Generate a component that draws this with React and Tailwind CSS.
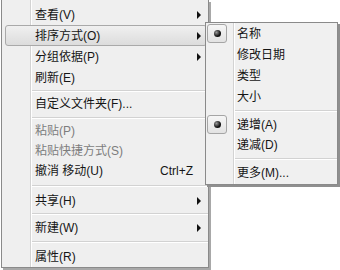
import React from 'react';

// Windows 7 style context menu with the "排序方式" submenu open
const mainItems = [
  { label: '查看(V)', arrow: true, h: 'h-[21px]' },
  { label: '排序方式(O)', arrow: true, h: 'h-[21px]', active: true },
  { label: '分组依据(P)', arrow: true, h: 'h-[21px]' },
  { label: '刷新(E)', h: 'h-[21px]' },
  { sep: 'h-[6px]' },
  { label: '自定义文件夹(F)...', h: 'h-[20px]' },
  { sep: 'h-[7px]' },
  { label: '粘贴(P)', h: 'h-[20px]', disabled: true },
  { label: '粘贴快捷方式(S)', h: 'h-[20px]', disabled: true },
  { label: '撤消 移动(U)', h: 'h-[20px]', shortcut: 'Ctrl+Z' },
  { sep: 'h-[10px]' },
  { label: '共享(H)', arrow: true, h: 'h-[20px]' },
  { sep: 'h-[6px]' },
  { label: '新建(W)', arrow: true, h: 'h-[21px]' },
  { sep: 'h-[8px]' },
  { label: '属性(R)', h: 'h-[21px]' },
];

const subItems = [
  { label: '名称', h: 'h-[21px]', radio: true },
  { label: '修改日期', h: 'h-[21px]' },
  { label: '类型', h: 'h-[21px]' },
  { label: '大小', h: 'h-[21px]' },
  { sep: 'h-[7px]' },
  { label: '递增(A)', h: 'h-[21px]', radio: true },
  { label: '递减(D)', h: 'h-[20px]' },
  { sep: 'h-[8px]' },
  { label: '更多(M)...', h: 'h-[20px]' },
];

const Arrow = () => (
  <span className="block ml-auto w-0 h-0 border-y-[4px] border-y-transparent border-l-[4px] border-l-[#111]" />
);

const Separator = ({ h, left }) => (
  <div className={`${h} flex flex-col justify-center ${left}`}>
    <div className="h-px bg-[#d2d2d2]" />
    <div className="h-px bg-white" />
  </div>
);

const RadioBox = () => (
  <div className="w-[20px] h-[19px] rounded-[3px] border border-[#a5a5a5] bg-[linear-gradient(#f6f6f6,#e2e2e2)] flex items-center justify-center">
    <span className="w-[7px] h-[7px] rounded-full bg-[radial-gradient(circle_at_35%_35%,#9a9a9a,#111_60%)]" />
  </div>
);

export default function App() {
  return (
    <div
      className="relative w-[340px] h-[270px] bg-white text-[12px] leading-none text-[#151515] overflow-hidden"
      style={{ fontFamily: '"Liberation Sans", "Noto Sans CJK SC", sans-serif' }}
    >
      {/* main menu */}
      <div className="ml-[1px] w-[208px] border border-t-0 border-[#8a8a8a] bg-[#efefef] shadow-[2px_2px_0_#a8a8a8] bg-[linear-gradient(to_right,transparent_28px,#d3d3d3_28px,#d3d3d3_29px,#fff_29px,#fff_30px,transparent_30px)]">
        <div className="pt-[4px]">
          {mainItems.map((it, i) =>
            it.sep ? (
              <Separator key={i} h={it.sep} left="ml-[30px]" />
            ) : (
              <div
                key={i}
                className={`${it.h} ml-[3px] mr-[1px] pl-[29px] pr-[5px] flex items-center rounded-[3px] border ${
                  it.active
                    ? 'border-[#a9a9a9] bg-[linear-gradient(#f0f0f0,#dcdcdc)]'
                    : 'border-transparent'
                } ${it.disabled ? 'text-[#7d7d7d]' : ''}`}
              >
                <span>{it.label}</span>
                {it.shortcut && <span className="ml-auto mr-[8px]">{it.shortcut}</span>}
                {it.arrow && <Arrow />}
              </div>
            )
          )}
        </div>
      </div>

      {/* submenu */}
      <div className="absolute left-[205px] top-[22px] w-[133px] border border-[#8a8a8a] bg-[#f0f0f0] shadow-[2px_2px_0_#8f8f8f] bg-[linear-gradient(to_right,transparent_27px,#d3d3d3_27px,#d3d3d3_28px,#fff_28px,#fff_29px,transparent_29px)]">
        <div className="pb-[1px]">
          {subItems.map((it, i) =>
            it.sep ? (
              <Separator key={i} h={it.sep} left="ml-[29px]" />
            ) : (
              <div key={i} className={`${it.h} flex items-center`}>
                <div className="w-[27px] shrink-0 pl-[1px] flex items-center">
                  {it.radio && <RadioBox />}
                </div>
                <span className="ml-[4px]">{it.label}</span>
              </div>
            )
          )}
        </div>
      </div>
    </div>
  );
}
